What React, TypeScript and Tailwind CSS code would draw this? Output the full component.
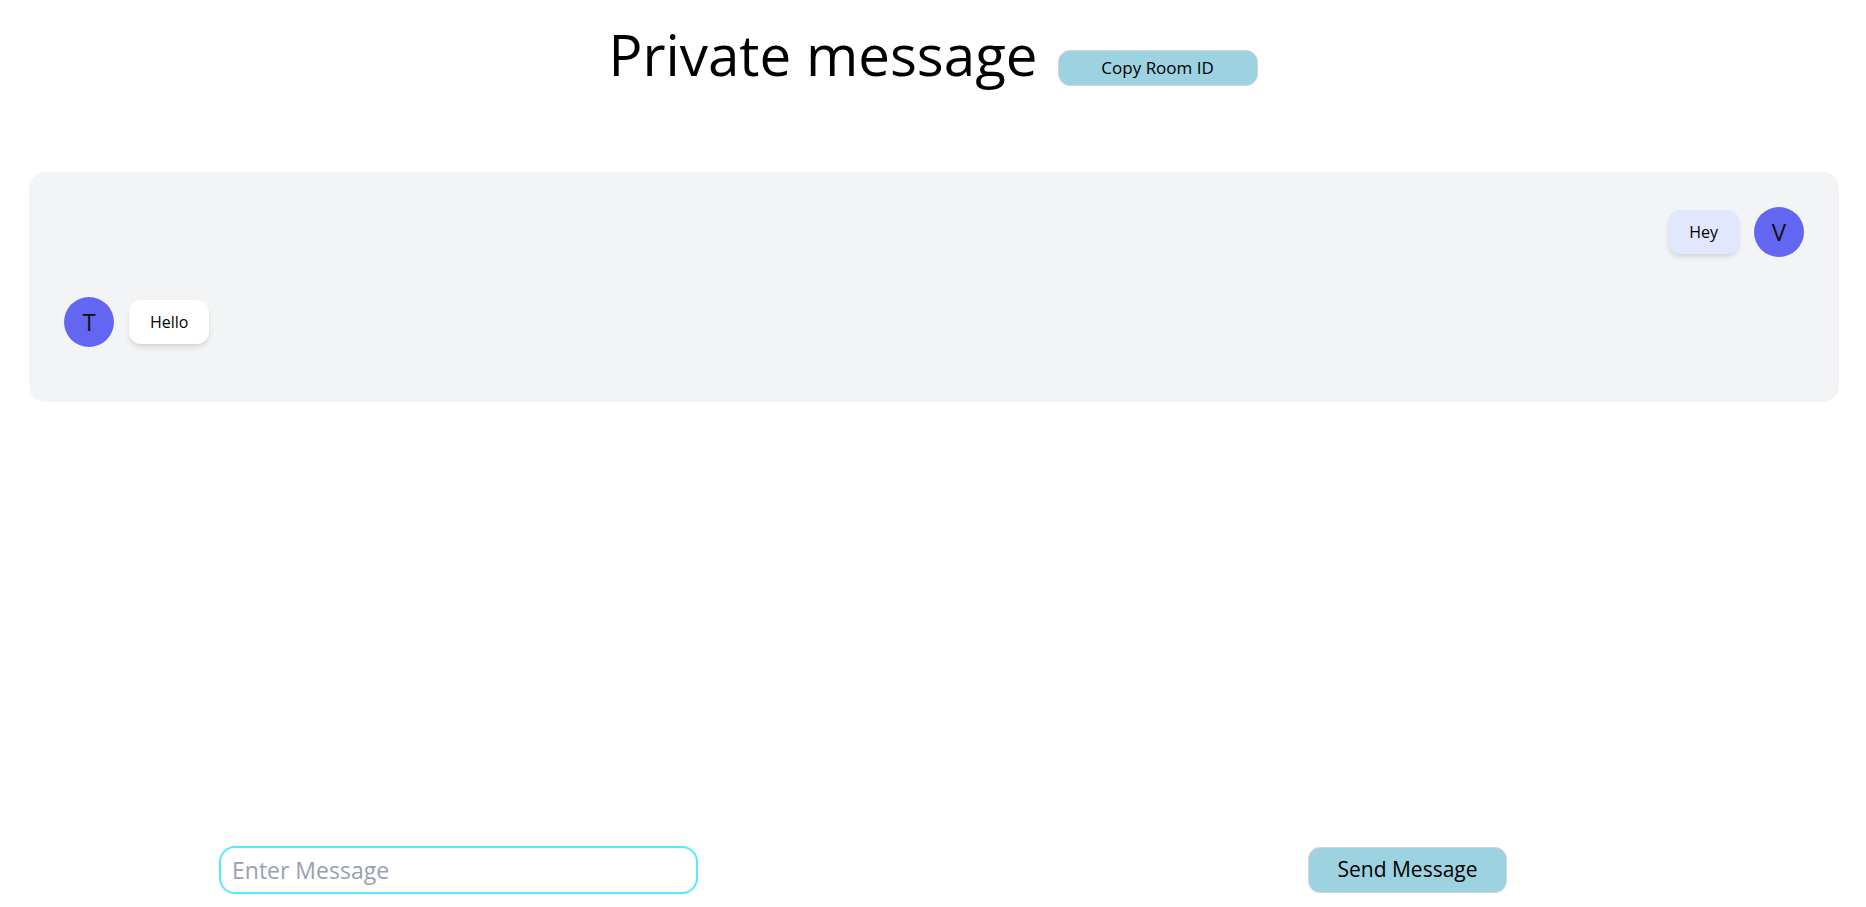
import { useState } from 'react';

type Message = {
  id: number;
  author: string;
  text: string;
  mine: boolean;
};

const initialMessages: Message[] = [
  { id: 1, author: 'V', text: 'Hey', mine: true },
  { id: 2, author: 'T', text: 'Hello', mine: false },
];

function Avatar({ letter }: { letter: string }) {
  return (
    <div className="w-[50px] h-[50px] rounded-full bg-[#6366f1] flex items-center justify-center text-[24px] text-[#111] shrink-0">
      {letter}
    </div>
  );
}

export default function App() {
  const [messages, setMessages] = useState<Message[]>(initialMessages);
  const [draft, setDraft] = useState('');

  const sendMessage = () => {
    if (!draft.trim()) return;
    setMessages((prev) => [...prev, { id: prev.length + 1, author: 'V', text: draft, mine: true }]);
    setDraft('');
  };

  return (
    <div className="min-h-screen flex flex-col bg-white text-black font-['Segoe_UI','Open_Sans',sans-serif]">
      <header className="flex justify-center items-start gap-5 pt-[27px]">
        <h1 className="text-[56.5px] leading-none">Private message</h1>
        <button className="mt-[23px] w-[200px] h-[36px] rounded-xl bg-[#9dd3e0] border border-gray-300 text-[17px]">
          Copy Room ID
        </button>
      </header>

      <div className="ml-[29px] mr-[27px] mt-[86px] bg-gray-100 rounded-2xl px-[35px] pt-[35px] pb-[55px] flex flex-col gap-10">
        {messages.map((m) =>
          m.mine ? (
            <div key={m.id} className="flex items-center justify-end gap-[15px]">
              <div className="px-[21px] py-2.5 rounded-xl bg-indigo-100 shadow-md text-base">{m.text}</div>
              <Avatar letter={m.author} />
            </div>
          ) : (
            <div key={m.id} className="flex items-center justify-start gap-[15px]">
              <Avatar letter={m.author} />
              <div className="px-[21px] py-2.5 rounded-xl bg-white shadow-md text-base">{m.text}</div>
            </div>
          )
        )}
      </div>

      <div className="flex-1" />

      <div className="grid grid-cols-2 gap-8 justify-items-center items-center pb-[13px]">
        <input
          value={draft}
          onChange={(e) => setDraft(e.target.value)}
          placeholder="Enter Message"
          className="w-[479px] h-[48px] border-2 border-cyan-300 rounded-2xl pl-[11px] text-[23px] outline-none placeholder:text-gray-400"
        />
        <button
          onClick={sendMessage}
          className="w-[199px] h-[46px] rounded-xl bg-[#9dd3e0] border border-gray-300 text-[21px]"
        >
          Send Message
        </button>
      </div>
    </div>
  );
}
